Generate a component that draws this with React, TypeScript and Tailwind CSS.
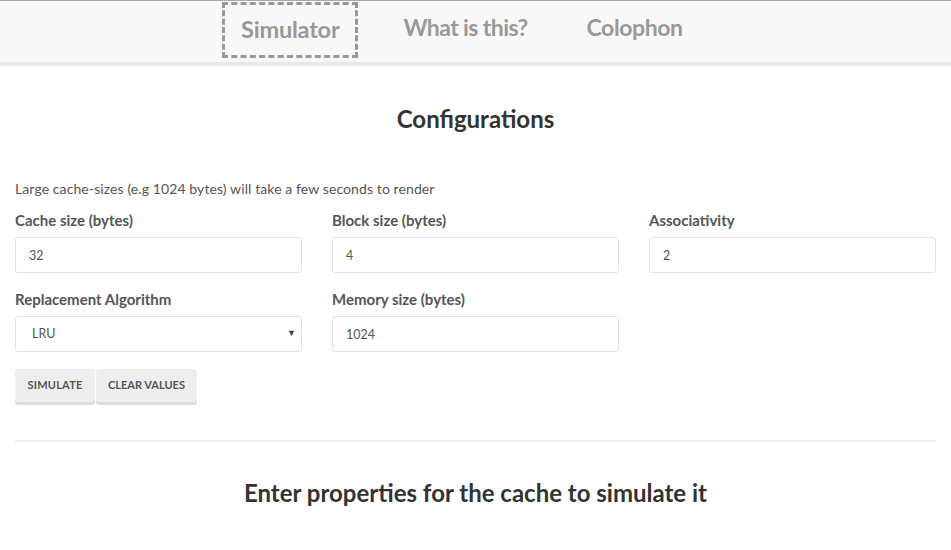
export default function App() {
  const font = { fontFamily: 'Lato, "Open Sans", sans-serif' };

  return (
    <div className="min-h-[550px] bg-white text-[#555]" style={font}>
      {/* Top nav */}
      <nav className="border-t border-[#aaa] bg-[#f8f8f8] h-[62px] shadow-[0_4px_0_#e8e8e8]">
        <ul className="flex items-start h-full pl-[222px]">
          <li className="h-[56px] mt-[1px] border-[3px] border-dashed border-[#999] px-[16px] flex items-center">
            <span className="text-[23.5px] font-bold text-[#999] tracking-[-0.2px]">Simulator</span>
          </li>
          <li className="h-[53px] flex items-center ml-[45px]">
            <span className="text-[23px] font-bold text-[#999] tracking-[-0.6px]">What is this?</span>
          </li>
          <li className="h-[53px] flex items-center ml-[59px]">
            <span className="text-[23px] font-bold text-[#999] tracking-[-0.4px]">Colophon</span>
          </li>
        </ul>
      </nav>

      <main className="px-[15px] pt-[42px]">
        <h2 className="text-center text-[24px] font-bold text-[#333] leading-[30px]">Configurations</h2>

        <p className="mt-[45px] text-[14px] leading-[20px] text-[#555] tracking-[0.1px]">
          Large cache-sizes (e.g 1024 bytes) will take a few seconds to render
        </p>

        <div className="grid grid-cols-3 gap-x-[30px] mt-[13px]">
          <Field label="Cache size (bytes)" value="32" />
          <Field label="Block size (bytes)" value="4" />
          <Field label="Associativity" value="2" />

          <div className="mt-[18px]">
            <label className="block text-[15px] font-bold text-[#555] leading-[16px] mb-[9px]">Replacement Algorithm</label>
            <div className="relative">
              <select className="w-full h-[36px] appearance-none border border-[#e3e3e3] rounded-[3px] bg-white pl-[16px] text-[12.5px] text-[#555] outline-none">
                <option>LRU</option>
                <option>FIFO</option>
                <option>Random</option>
              </select>
              <span className="absolute right-[6px] top-[10px] text-[9px] text-[#444] pointer-events-none">▼</span>
            </div>
          </div>
          <div className="mt-[18px]">
            <Field label="Memory size (bytes)" value="1024" />
          </div>
          <div />
        </div>

        <div className="flex mt-[17px] gap-[1px]">
          <button className="h-[33px] px-[12.5px] bg-[#eee] rounded-[3px] shadow-[0_3px_0_#ddd] text-[11px] font-bold text-[#555] tracking-[0.2px]">
            SIMULATE
          </button>
          <button className="h-[33px] px-[12px] bg-[#eee] rounded-[3px] shadow-[0_3px_0_#ddd] text-[11px] font-bold text-[#555]">
            CLEAR VALUES
          </button>
        </div>

        <hr className="mt-[38px] border-0 border-t-2 border-[#f0f0f0]" />

        <h2 className="text-center text-[24px] font-bold text-[#333] leading-[30px] mt-[36px]">
          Enter properties for the cache to simulate it
        </h2>
      </main>
    </div>
  );
}

function Field({ label, value }: { label: string; value: string }) {
  return (
    <div>
      <label className="block text-[15px] font-bold text-[#555] leading-[16px] mb-[9px]">{label}</label>
      <input
        defaultValue={value}
        className="w-full h-[36px] border border-[#e3e3e3] rounded-[3px] bg-white px-[13px] text-[12.5px] text-[#555] outline-none"
      />
    </div>
  );
}
